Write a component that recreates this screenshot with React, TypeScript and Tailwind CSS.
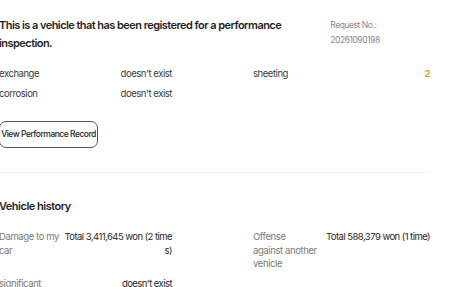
const topRows = [
  { left: 'exchange', leftValue: "doesn't exist", right: 'sheeting', rightValue: '2' },
  { left: 'corrosion', leftValue: "doesn't exist", right: '', rightValue: '' },
];

const historyRows = [
  { label: 'Damage to my car', value: 'Total 3,411,645 won (2 times)' },
  { label: 'Offense against another vehicle', value: 'Total 588,379 won (1 time)' },
  { label: 'significant', value: "doesn't exist" },
  { label: '', value: '' },
];

export default function App() {
  return (
    <div className="bg-white h-screen overflow-hidden" style={{ fontFamily: 'Inter, "Noto Sans", sans-serif' }}>
      <div className="-ml-[1px] w-[431px] pt-[16px]">
        {/* Summary */}
        <div className="flex justify-between gap-8">
          <h1 className="w-[300px] text-[11px] leading-[18px] font-semibold text-[#1f1f1f] tracking-[-0.55px]">
            This is a vehicle that has been registered for a performance inspection.
          </h1>
          <div className="w-[100px] pt-[2px] text-[8.5px] leading-[15px] tracking-[-0.45px] text-[#8a8a8a]">
            <p>Request No.:</p>
            <p>20261090198</p>
          </div>
        </div>

        <div className="mt-[15px] grid grid-cols-[173px_1fr] gap-x-[81px] gap-y-[6px] text-[9.5px] leading-[14px] tracking-[-0.45px] text-[#3a3a3a]">
          {topRows.map((row) => [
            <div key={row.left} className="flex justify-between">
              <span>{row.left}</span>
              <span>{row.leftValue}</span>
            </div>,
            <div key={row.left + '-r'} className="flex justify-between">
              <span>{row.right}</span>
              <span className="font-semibold text-[#f5921e]">{row.rightValue}</span>
            </div>,
          ])}
        </div>

        <button className="mt-[20px] h-[27px] w-[99px] whitespace-nowrap rounded-[7px] border border-[#555] text-[8.5px] font-medium tracking-[-0.5px] text-[#222]">
          View Performance Record
        </button>

        <div className="mt-[24px] h-px w-[430px] bg-[#efefef]" />

        {/* Vehicle history */}
        <h2 className="mt-[25px] text-[11px] leading-[16px] font-semibold tracking-[-0.5px] text-[#1f1f1f]">Vehicle history</h2>

        <div className="mt-[16px] grid grid-cols-[173px_1fr] gap-x-[81px] gap-y-[6px] text-[9.5px] leading-[13.5px]">
          {historyRows.map((row, i) => (
            <div key={i} className="flex justify-between">
              <span className="w-[64px] shrink-0 tracking-[-0.4px] text-[#7a7a7a]">{row.label}</span>
              <span className="w-[109px] text-right break-all tracking-[-0.55px] text-[#1f1f1f]">{row.value}</span>
            </div>
          ))}
        </div>
      </div>
    </div>
  );
}
